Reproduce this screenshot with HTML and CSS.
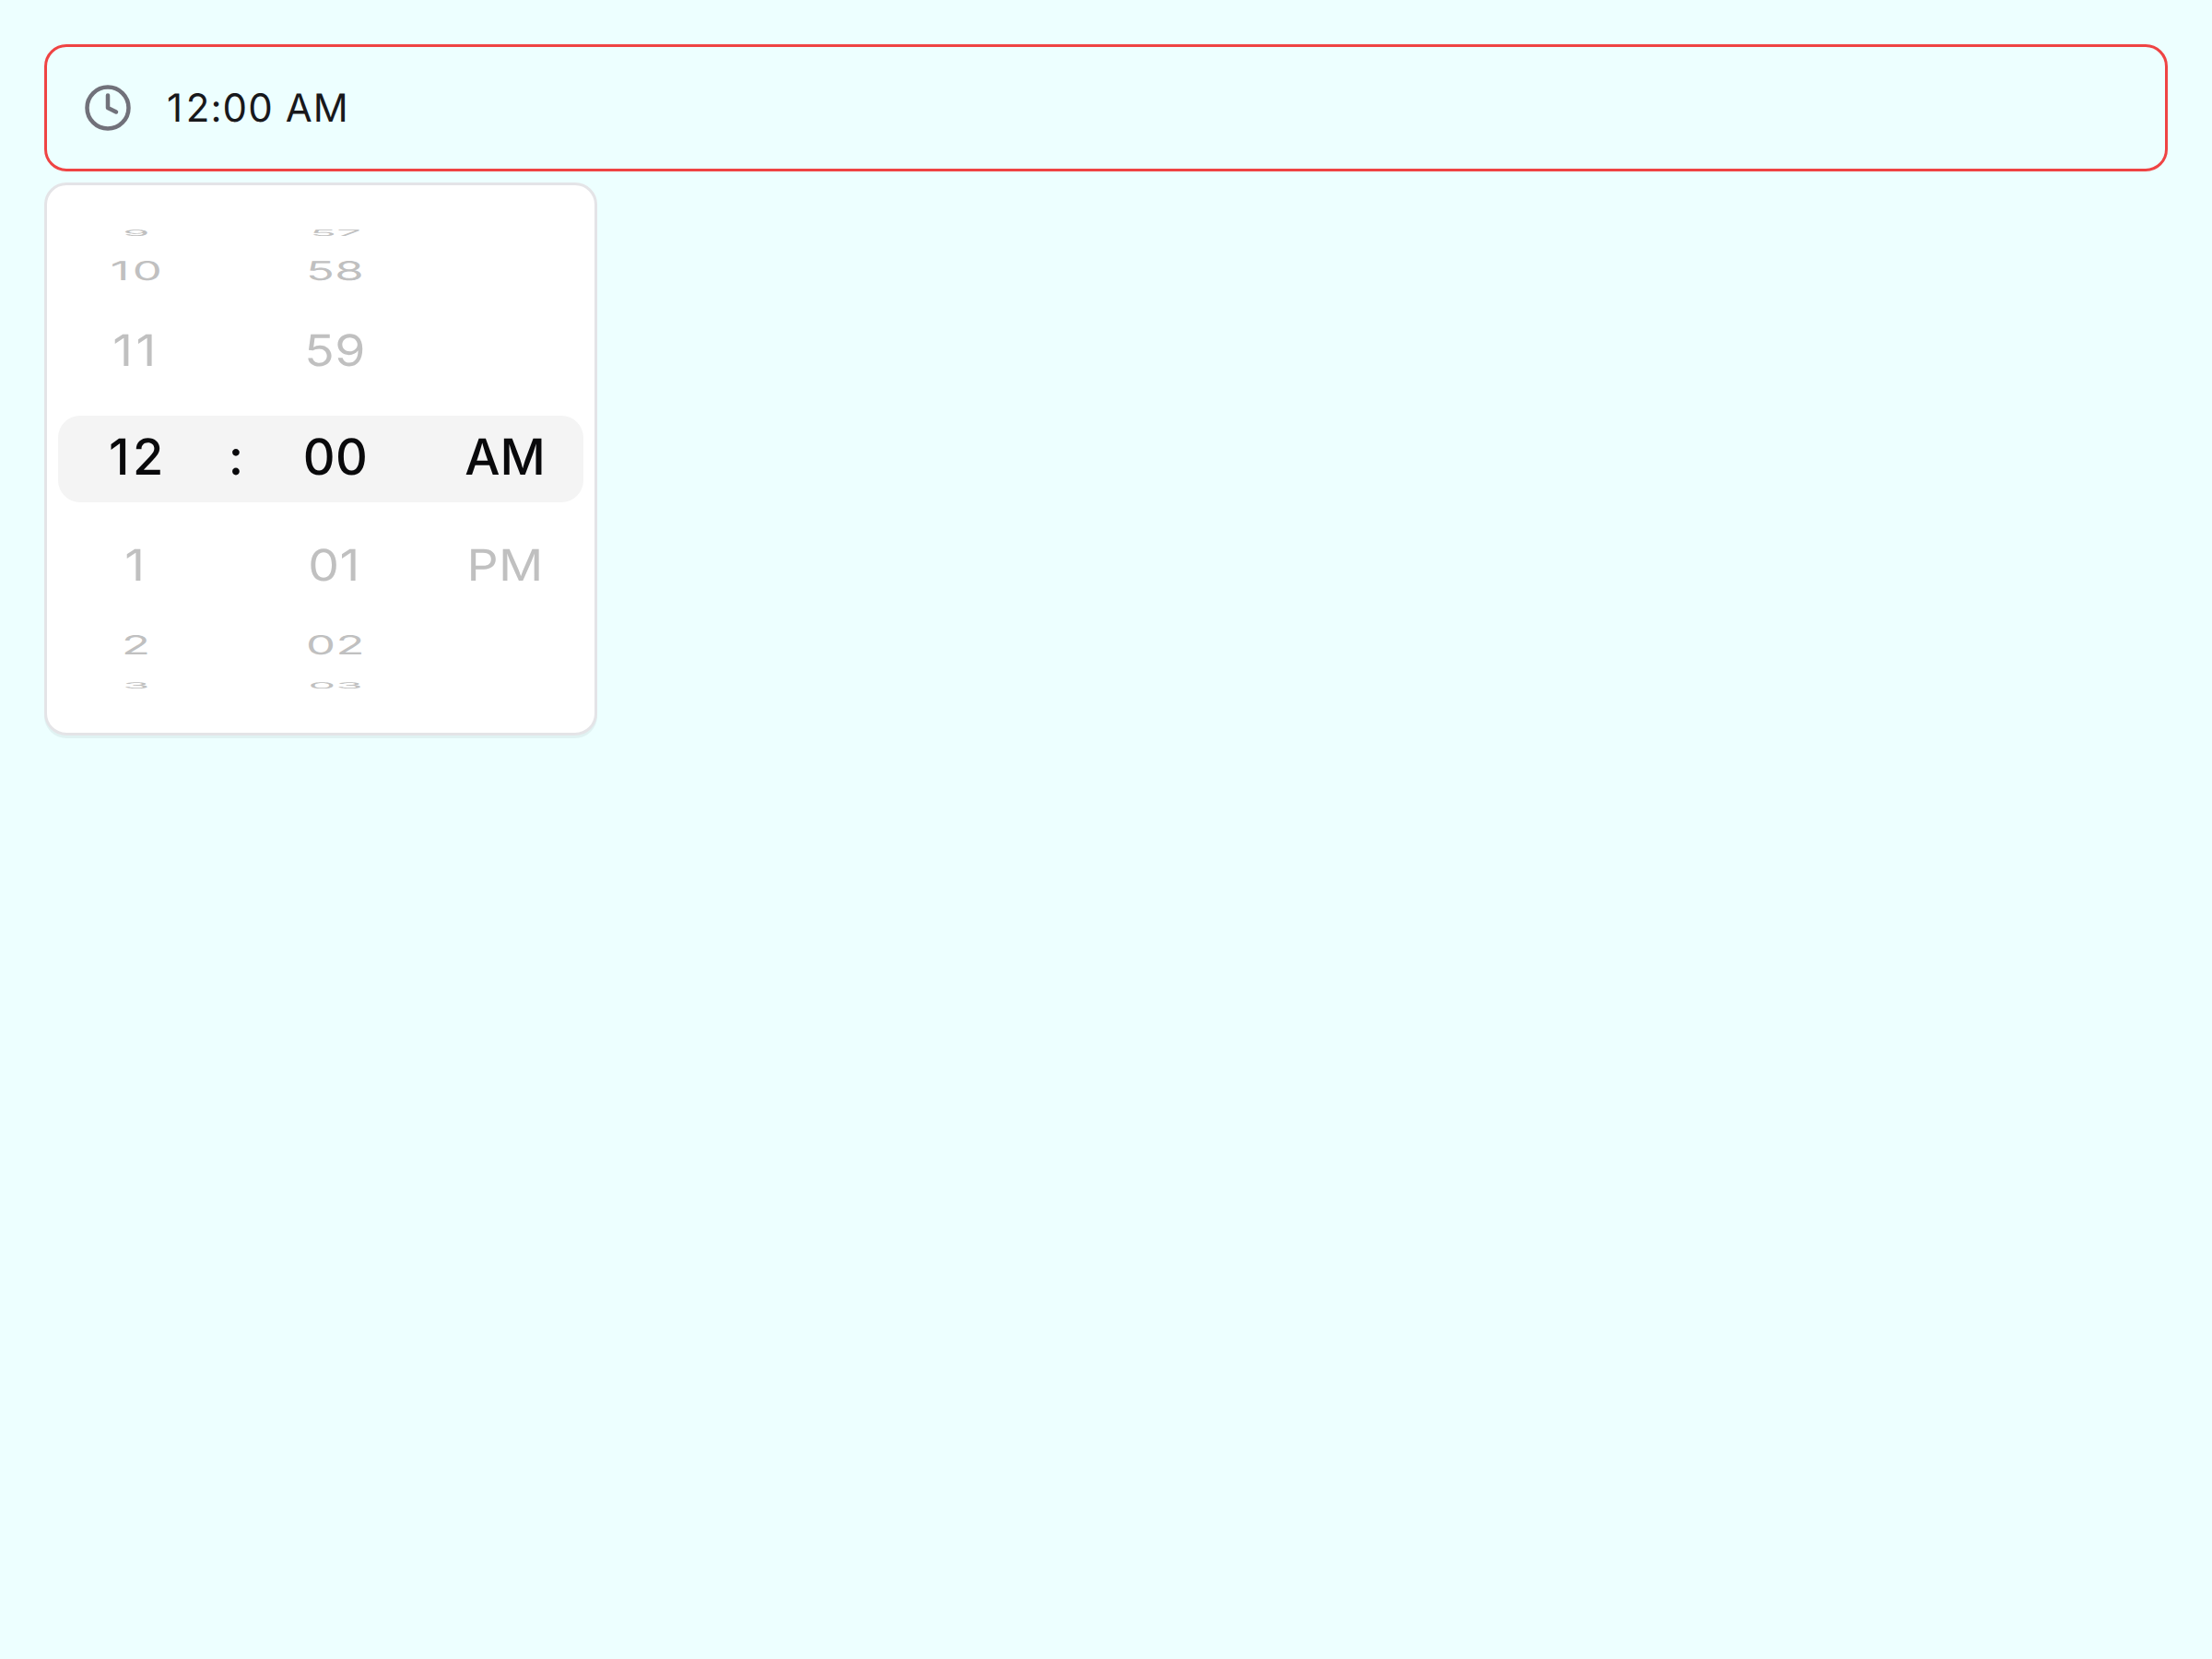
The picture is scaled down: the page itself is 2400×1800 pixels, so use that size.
FILE: index.html
```html
<!DOCTYPE html>
<html lang="en">
<head>
<meta charset="utf-8">
<title>Time picker</title>
<link rel="stylesheet" href="styles.css">
</head>
<body>
<div class="field">
  <svg class="clock" viewBox="0 0 24 24"><circle cx="12" cy="12" r="10"/><path d="M12 6v6l4 2"/></svg>
  <span class="value"><span class="one">1</span>2:00 AM</span>
</div>
<div class="popover">
  <div class="wheels">
    <div class="wheel">
      <div class="row far"><div>9</div></div>
      <div class="row mid"><div><span class="one">1</span>0</div></div>
      <div class="row near"><div><span class="one">11</span></div></div>
      <div class="row current"><div><span class="one">1</span>2</div></div>
      <div class="row near"><div><span class="one">1</span></div></div>
      <div class="row mid"><div>2</div></div>
      <div class="row far"><div>3</div></div>
    </div>
    <div class="colon">:</div>
    <div class="wheel">
      <div class="row far"><div>57</div></div>
      <div class="row mid"><div>58</div></div>
      <div class="row near"><div>59</div></div>
      <div class="row current"><div>00</div></div>
      <div class="row near"><div>0<span class="one">1</span></div></div>
      <div class="row mid"><div>02</div></div>
      <div class="row far"><div>03</div></div>
    </div>
    <div class="wheel period">
      <div class="row far"></div>
      <div class="row mid"></div>
      <div class="row near"></div>
      <div class="row current"><div>AM</div></div>
      <div class="row near"><div>PM</div></div>
      <div class="row mid"></div>
      <div class="row far"></div>
    </div>
  </div>
</div>
</body>
</html>
```
FILE: styles.css
```css
* { box-sizing: border-box; }
body {
  margin: 0;
  padding: 48px;
  min-height: 1800px;
  background: #edffff;
  color: #09090b;
  font-family: Inter, "Liberation Sans", sans-serif;
  text-rendering: geometricPrecision;
}
.field {
  display: flex;
  align-items: center;
  gap: 37px;
  height: 138px;
  padding: 0 39px;
  border: 3px solid #ef4444;
  border-radius: 24px;
}
.clock {
  width: 54px;
  height: 54px;
  fill: none;
  stroke: #71717a;
  stroke-width: 2;
  stroke-linecap: round;
  stroke-linejoin: round;
}
.value {
  font-size: 42px;
  font-weight: 430;
  letter-spacing: 1.1px;
  color: #18181b;
}
.one { letter-spacing: 3.6px; }
.popover {
  width: 600px;
  height: 600px;
  margin-top: 12px;
  padding: 0 12px;
  display: flex;
  align-items: center;
  background: #fff;
  border: 3px solid #e4e4e7;
  border-radius: 24px;
  box-shadow: 0 3px 0 rgba(0, 0, 0, 0.05);
}
.wheels {
  position: relative;
  display: grid;
  grid-template-columns: 170px 46px 170px 184px;
  align-items: center;
  width: 570px;
}
/* band behind the selected row */
.wheels::before {
  content: "";
  position: absolute;
  inset: calc(50% - 47px) 0 auto;
  height: 94px;
  border-radius: 24px;
  background: #f4f4f4;
}
.wheel, .colon { position: relative; }
.period { padding-left: 14px; }
.row {
  display: flex;
  align-items: center;
  justify-content: center;
  font-size: 54px;
  font-weight: 440;
  line-height: 1;
  letter-spacing: 0.5px;
  color: #c0c0c0;
}
.period .current { letter-spacing: 0; }
.far { height: 51px; }
.mid { height: 34px; }
.near { height: 139px; }
.current { height: 94px; }
.current, .colon {
  color: #09090b;
  font-weight: 530;
}
.colon {
  padding-bottom: 2px;
  text-align: center;
  font-size: 54px;
  line-height: 1;
}
/* rows flatten as the drum turns away */
.current div { transform: translateY(-0.8px); }
.near div { transform: translateY(-0.4px) scale(0.99, 0.87); }
.mid div { transform: translateY(-0.2px) scale(0.94, 0.53); }
.far div { transform: translateY(-0.5px) scale(0.87, 0.17); }
```
